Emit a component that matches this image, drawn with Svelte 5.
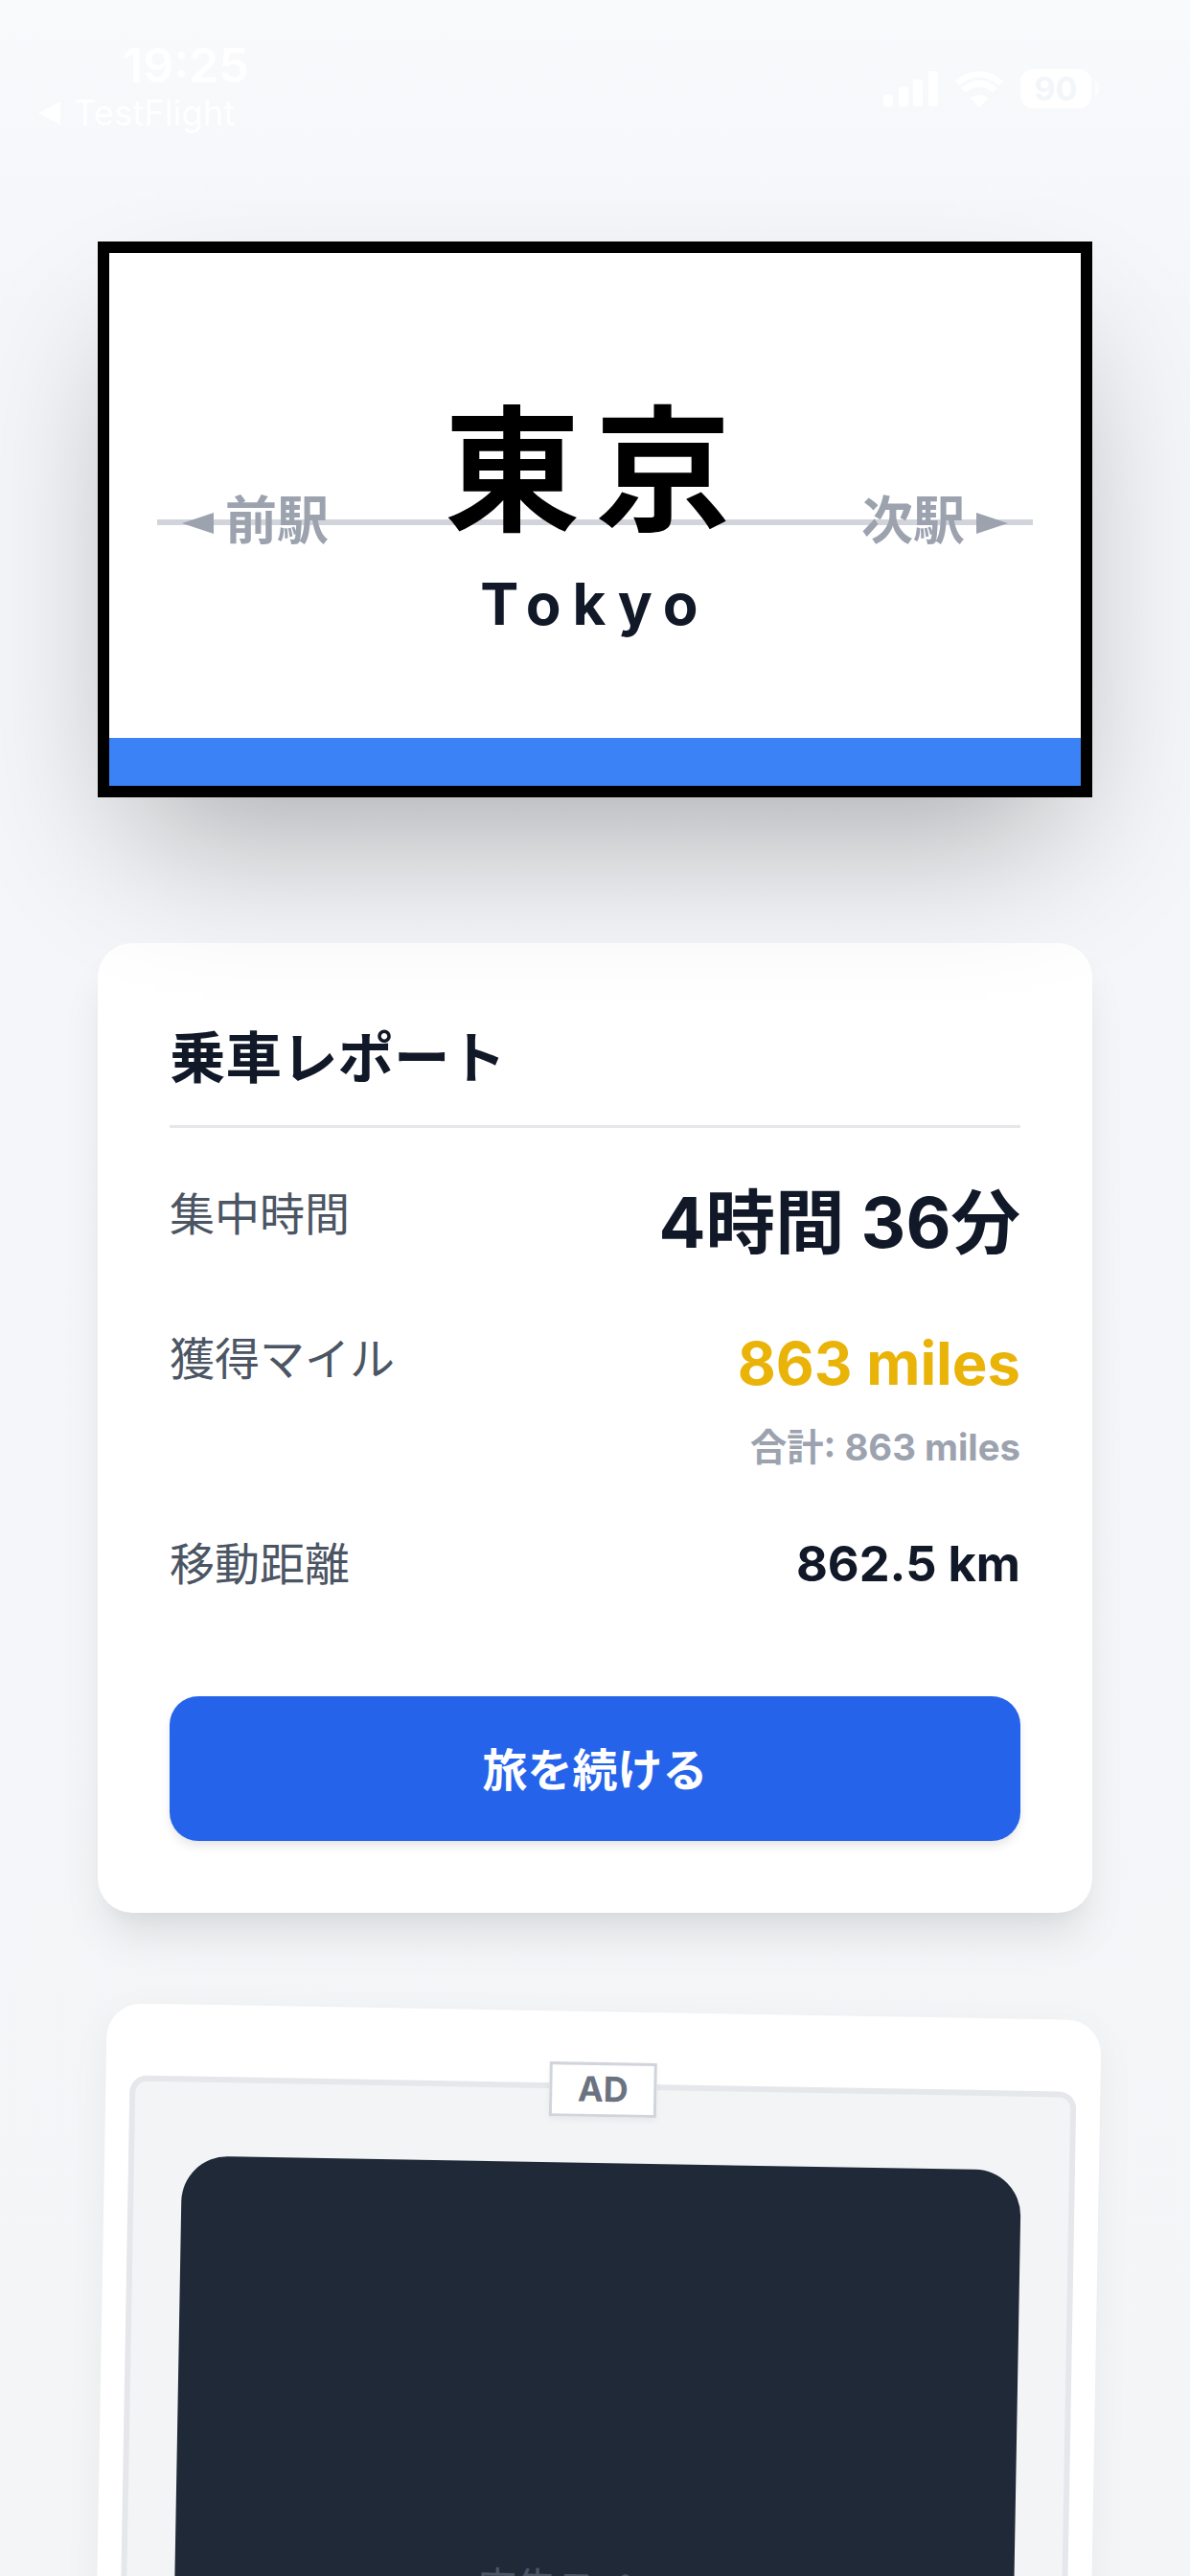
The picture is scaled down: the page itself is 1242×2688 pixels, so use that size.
<script>
    const rows = [
        { label: "集中時間", value: "4時間 36分", kind: "duration" },
        { label: "獲得マイル", value: "863 miles", kind: "miles", sub: "合計: 863 miles" },
        { label: "移動距離", value: "862.5 km", kind: "distance" }
    ];
    const bars = [
        { x: 0, y: 25, h: 12 },
        { x: 16, y: 17, h: 20 },
        { x: 31, y: 9, h: 28 },
        { x: 47, y: 0, h: 37 }
    ];
</script>

<div class="page">
    <header class="status">
        <div class="status-left">
            <div class="time">19:25</div>
            <div class="back">
                <span class="back-arrow"></span>
                <span>TestFlight</span>
            </div>
        </div>
        <div class="status-right">
            <svg class="signal" width="57" height="37" viewBox="0 0 57 37">
                {#each bars as bar}
                    <rect x={bar.x} y={bar.y} width="10" height={bar.h} rx="2.5" fill="#fff" />
                {/each}
            </svg>
            <svg class="wifi" width="50" height="38" viewBox="0 0 50 38">
                <path d="M25 38 L16 28.5 Q25 21 34 28.5 Z" fill="#fff" />
                <path d="M10.5 22.5 L6 17.5 Q25 2 44 17.5 L39.5 22.5 Q25 11 10.5 22.5 Z" fill="#fff" />
                <path d="M4.5 15 L0 10.5 Q25 -10 50 10.5 L45.5 15 Q25 -2 4.5 15 Z" fill="#fff" />
            </svg>
            <div class="battery">90</div>
        </div>
    </header>

    <section class="sign">
        <div class="rail"></div>
        <div class="neighbor prev">
            <span class="tri tri-left"></span>
            <span>前駅</span>
        </div>
        <div class="neighbor next">
            <span>次駅</span>
            <span class="tri tri-right"></span>
        </div>
        <div class="names">
            <div class="name-ja">東京</div>
            <div class="name-en">Tokyo</div>
        </div>
        <div class="line-color"></div>
    </section>

    <section class="report">
        <h2>乗車レポート</h2>
        <div class="rows">
            {#each rows as row}
                <div class="row">
                    <span class="label {row.kind}">{row.label}</span>
                    <div class="figures">
                        <div class="value {row.kind}">{row.value}</div>
                        {#if row.sub}
                            <div class="sub">{row.sub}</div>
                        {/if}
                    </div>
                </div>
            {/each}
        </div>
        <button class="continue">旅を続ける</button>
    </section>

    <section class="ad-card">
        <div class="ad-frame">
            <div class="ad-tag">AD</div>
            <div class="ad-slot">広告スペース</div>
        </div>
    </section>
</div>

<style>
    :global(body) {
        margin: 0;
        background: #f5f7fa;
    }

    .page {
        position: relative;
        width: 1242px;
        height: 2688px;
        overflow: hidden;
        box-sizing: border-box;
        padding: 0 102px;
        background: linear-gradient(180deg, #f8fafc 0%, #f4f6f9 12%, #f3f5f7 100%);
        font-family: Inter, "Noto Sans CJK JP", sans-serif;
        color: #111827;
    }

    .status {
        height: 252px;
        margin: 0 -102px;
        padding: 0 103px 0 40px;
        box-sizing: border-box;
        display: flex;
        justify-content: space-between;
        align-items: flex-start;
        color: #fff;
    }

    .time {
        margin: 38px 0 0 88px;
        font-size: 50px;
        line-height: 60px;
        font-weight: 600;
    }

    .back {
        display: flex;
        align-items: center;
        gap: 14px;
        font-size: 36.5px;
        line-height: 40px;
    }

    .back-arrow {
        width: 0;
        height: 0;
        border-style: solid;
        border-width: 12px 23px 12px 0;
        border-color: transparent #fff transparent transparent;
    }

    .status-right {
        display: flex;
        align-items: center;
        gap: 18px;
        margin-top: 72px;
    }

    .battery {
        position: relative;
        width: 74px;
        height: 41px;
        border-radius: 13px;
        background: #fff;
        color: #f3f6f9;
        font-size: 34px;
        line-height: 41px;
        font-weight: 700;
        text-align: center;
    }

    .battery::after {
        content: "";
        position: absolute;
        right: -8px;
        top: 13px;
        width: 4px;
        height: 14px;
        border-radius: 0 3px 3px 0;
        background: rgba(255, 255, 255, 0.6);
    }

    .sign {
        position: relative;
        height: 580px;
        box-sizing: border-box;
        border: 12px solid #000;
        background: #fff;
        display: flex;
        flex-direction: column;
        box-shadow: 0 75px 150px -36px rgba(0, 0, 0, 0.3);
    }

    .rail {
        position: absolute;
        left: 50px;
        right: 50px;
        top: 278px;
        height: 6px;
        background: #d1d5db;
    }

    .neighbor {
        position: absolute;
        top: 246px;
        display: flex;
        align-items: center;
        gap: 12px;
        font-size: 54px;
        line-height: 68px;
        font-weight: 700;
        color: #9ca3af;
    }

    .prev {
        left: 76px;
    }

    .next {
        right: 76px;
    }

    .tri {
        width: 0;
        height: 0;
        border-style: solid;
        margin-top: 4px;
    }

    .tri-left {
        border-width: 11px 33px 11px 0;
        border-color: transparent #9ca3af transparent transparent;
    }

    .tri-right {
        border-width: 11px 0 11px 33px;
        border-color: transparent transparent transparent #9ca3af;
    }

    .names {
        position: relative;
        flex: 1;
        display: flex;
        flex-direction: column;
        align-items: center;
        padding-top: 139px;
    }

    .name-ja {
        font-size: 142px;
        line-height: 176px;
        font-weight: 700;
        letter-spacing: 15.5px;
        color: #000;
    }

    .name-en {
        font-size: 60px;
        line-height: 76px;
        font-weight: 700;
        letter-spacing: 12px;
        color: #111827;
        margin-top: 13px;
    }

    .line-color {
        height: 50px;
        background: #3b82f6;
    }

    .report {
        margin-top: 152px;
        padding: 76px 75px 75px;
        background: #fff;
        border-radius: 36px;
        box-shadow: 0 30px 45px -9px rgba(0, 0, 0, 0.1), 0 12px 18px -9px rgba(0, 0, 0, 0.04);
    }

    h2 {
        margin: 0;
        padding: 2px 0 28px;
        border-bottom: 3px solid #e5e7eb;
        font-size: 58.5px;
        line-height: 84px;
        font-weight: 700;
    }

    .rows {
        margin-top: 49px;
        display: flex;
        flex-direction: column;
        gap: 58px;
    }

    .row {
        display: flex;
        justify-content: space-between;
        align-items: flex-start;
    }

    .label {
        font-size: 47px;
        line-height: 68px;
        color: #4b5563;
    }

    .label.duration {
        padding-top: 7px;
    }

    .label.distance {
        padding-top: 2px;
    }

    .figures {
        text-align: right;
    }

    .value {
        font-weight: 700;
    }

    .value.duration {
        font-size: 72.5px;
        line-height: 100px;
    }

    .value.miles {
        font-size: 61.6px;
        line-height: 78px;
        color: #eab308;
    }

    .value.distance {
        font-size: 50.6px;
        line-height: 72px;
    }

    .sub {
        margin-top: 20px;
        font-size: 38.3px;
        line-height: 56px;
        font-weight: 700;
        color: #9ca3af;
    }

    .continue {
        display: block;
        width: 100%;
        height: 151px;
        margin-top: 102px;
        padding: 0 0 5px;
        border: 0;
        border-radius: 30px;
        background: #2563eb;
        color: #fff;
        font: 700 47px Inter, "Noto Sans CJK JP", sans-serif;
        box-shadow: 0 6px 12px -2px rgba(0, 0, 0, 0.12);
    }

    .ad-card {
        margin-top: 103px;
        height: 1118px;
        box-sizing: border-box;
        padding: 75px 25px 25px;
        background: #fff;
        border-radius: 36px;
        transform: rotate(1deg);
        box-shadow: 0 12px 40px rgba(0, 0, 0, 0.05);
    }

    .ad-frame {
        position: relative;
        box-sizing: border-box;
        height: 100%;
        padding: 77px 50px 48px;
        border: 6px solid #e5e7eb;
        border-radius: 18px;
        background: #f3f4f6;
    }

    .ad-tag {
        position: absolute;
        left: 50%;
        top: -28px;
        transform: translateX(-50%);
        box-sizing: border-box;
        width: 112px;
        height: 57px;
        border: 3px solid #d1d5db;
        background: #fff;
        color: #6b7280;
        font-size: 36px;
        line-height: 51px;
        font-weight: 700;
        text-align: center;
        box-shadow: 0 3px 6px rgba(0, 0, 0, 0.05);
    }

    .ad-slot {
        height: 100%;
        border-radius: 48px;
        background: #1f2937;
        color: #4b5563;
        font-size: 42px;
        display: flex;
        align-items: center;
        justify-content: center;
    }
</style>
